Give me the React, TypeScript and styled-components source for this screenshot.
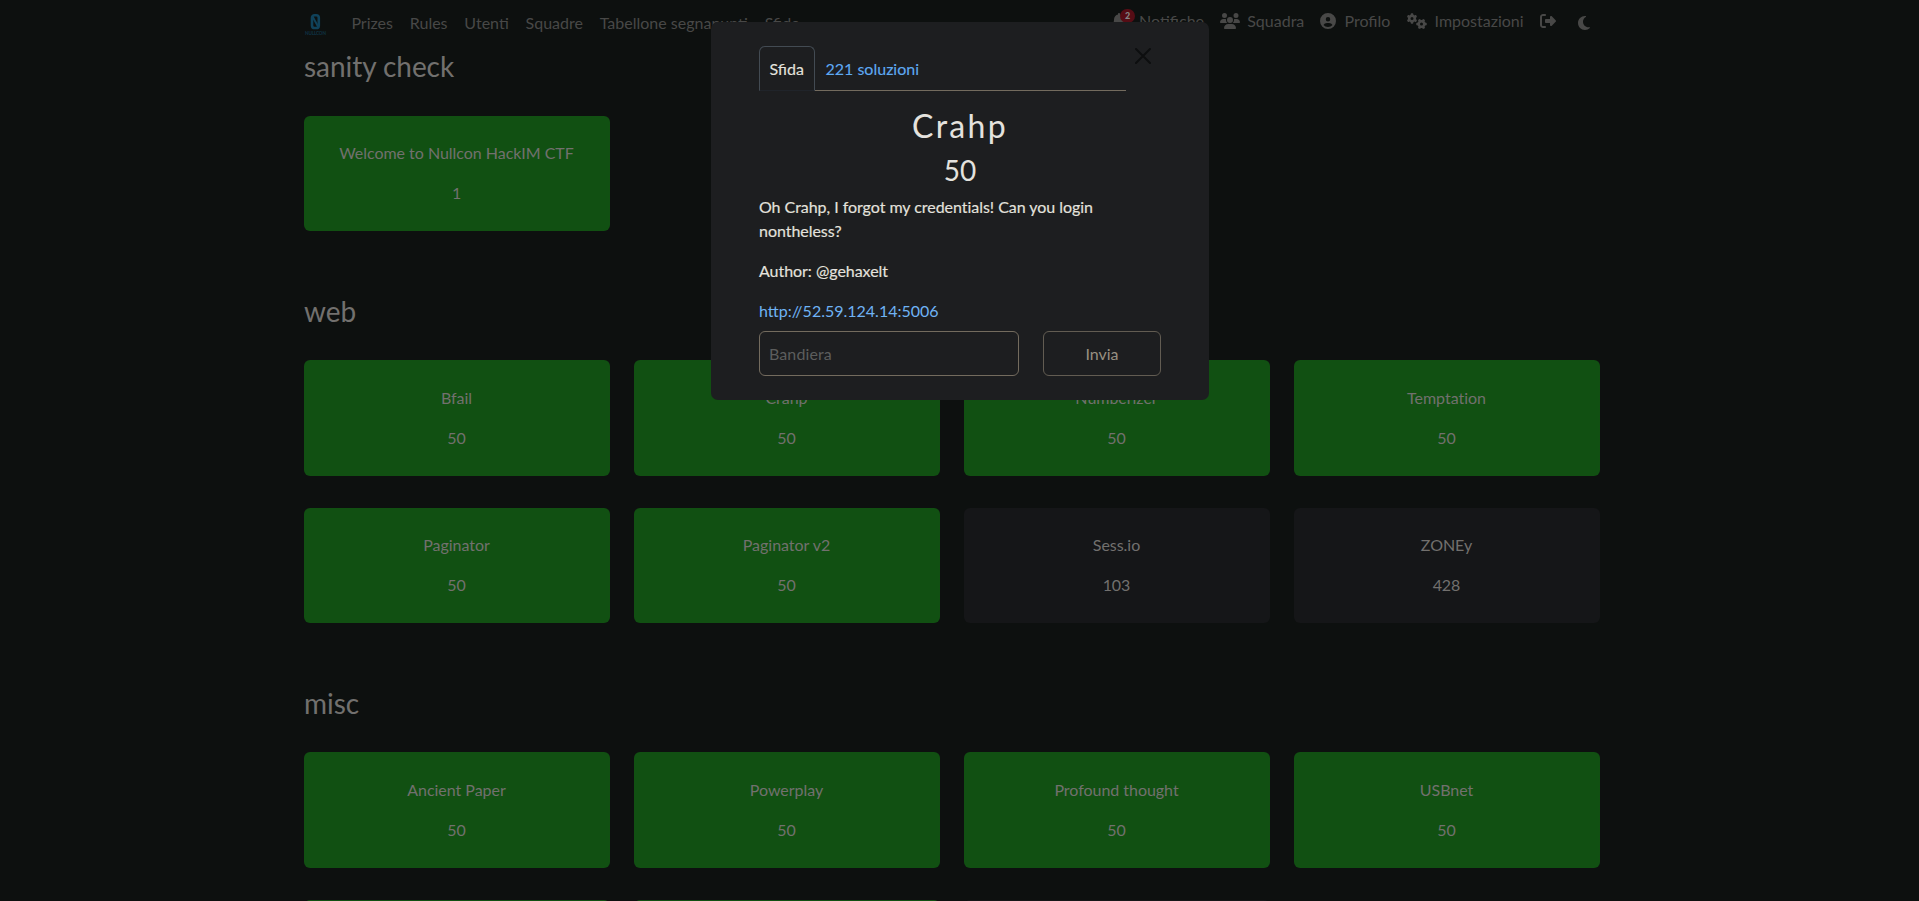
import React from "react";
import styled, { createGlobalStyle } from "styled-components";
import { FaBell, FaUsers, FaCircleUser, FaGears, FaRightFromBracket, FaMoon } from "react-icons/fa6";

const GlobalStyle = createGlobalStyle`
  * { box-sizing: border-box; }
  html, body { height: 100%; }
  body { margin: 0; background: #0d100f; font: 400 16px/24px Lato, sans-serif; overflow: hidden; }
  h2, h3, p, ul { margin: 0; padding: 0; font-weight: 400; }
  button, input { font: inherit; }
`;

const Page = styled.div`
  height: 100vh;
  overflow: hidden;
  color: #72706e;
`;

const Container = styled.div`
  width: 1296px;
  margin: 0 auto 0 304px;
`;

const Navbar = styled.nav`
  display: flex;
  align-items: flex-start;
  height: 50px;
  color: #484847;
`;

const Brand = styled.svg`
  width: 24px;
  height: 24px;
  margin: 12px 23.4px 0 0;
`;

const NavGroup = styled.div<{ $right?: boolean }>`
  display: flex;
  gap: ${(p) => (p.$right ? 16.2 : 16.8)}px;
  padding-top: ${(p) => (p.$right ? 9 : 11)}px;
  margin-left: ${(p) => (p.$right ? "auto" : "0")};
`;

const NavItem = styled.span<{ $gap?: number }>`
  position: relative;
  display: flex;
  align-items: center;
  gap: ${(p) => p.$gap ?? 8}px;
  white-space: nowrap;
`;

const ThemeToggle = styled(NavItem)`
  margin: 4px 8px 0 4px;
`;

const BellIcon = styled(FaBell)`
  margin-left: -1px;
`;

const Badge = styled.span`
  position: absolute;
  left: 8px;
  top: 0;
  width: 15px;
  height: 14px;
  border-radius: 7px;
  background: #560d15;
  color: #858585;
  font: 900 9px/14px Lato, sans-serif;
  text-align: center;
`;

const Section = styled.section`
  margin-bottom: 31.2px;

  & + & > h3 {
    height: 64.8px;
    margin-top: 32px;
  }
`;

const SectionTitle = styled.h3`
  height: 65.6px;
  font-size: 28px;
  line-height: 33.6px;
  letter-spacing: -0.05px;
`;

const Grid = styled.div`
  display: grid;
  grid-template-columns: repeat(4, 306px);
  column-gap: 24px;
`;

const Card = styled.div<{ $solved: boolean }>`
  height: 115.6px;
  margin-bottom: 32px;
  padding: 25.8px 1px 0 0;
  border-radius: 6px;
  background: ${(p) => (p.$solved ? "#115012" : "#151618")};
  text-align: center;
  letter-spacing: -0.03px;

  p + p { margin-top: 16px; }
`;

const Modal = styled.div`
  position: absolute;
  left: 711px;
  top: 22px;
  width: 498px;
  height: 378px;
  padding: 24px 48px;
  border-radius: 7px;
  background: #1d1e20;
  color: #e4e2de;
`;

const ModalHead = styled.div`
  display: flex;
  align-items: flex-start;
`;

const Tabs = styled.div`
  display: flex;
  width: 367px;
  height: 45px;
  border-bottom: 1px solid #736b5e;
`;

const Tab = styled.div<{ $active?: boolean }>`
  height: 45px;
  min-width: 56px;
  padding: 10px 9px 10px 9.5px;
  border: 1px solid ${(p) => (p.$active ? "#434b53" : "transparent")};
  border-bottom-color: ${(p) => (p.$active ? "#20242a" : "transparent")};
  border-radius: 6px 6px 0 0;
  color: ${(p) => (p.$active ? "#e4e2de" : "#5ea9f2")};
  -webkit-text-stroke: 0.12px;
`;

const Close = styled.svg`
  width: 16px;
  height: 16px;
  margin: 2px 0 0 9px;
`;

const ChallengeName = styled.h2`
  margin-top: 16px;
  font-size: 32px;
  line-height: 38.4px;
  letter-spacing: 2.3px;
  text-align: center;
`;

const ChallengeValue = styled.h3`
  margin-top: 9px;
  font-size: 28px;
  line-height: 33.6px;
  text-align: center;
`;

const Description = styled.div`
  margin-top: 7px;
  width: 367px;

  p + p { margin-top: 16px; }
`;

const Text = styled.p`
  letter-spacing: -0.04px;
  -webkit-text-stroke: 0.15px;
`;

const Link = styled.a`
  color: #6fb3f5;
`;

const SubmitRow = styled.div`
  display: flex;
  gap: 24px;
  margin-top: 8px;
`;

const FlagInput = styled.input`
  width: 260px;
  height: 45px;
  padding: 0 9px;
  border: 1px solid #736b5e;
  border-radius: 6px;
  background: transparent;
  &::placeholder { color: #5c5d5d; opacity: 1; letter-spacing: 0.1px; }
`;

const Submit = styled.button`
  width: 118px;
  height: 45px;
  padding: 0;
  border: 1px solid #625c52;
  border-radius: 6px;
  background: transparent;
  color: #989082;
`;

type Challenge = [name: string, value: number, solved: boolean];

const sections: { title: string; items: Challenge[] }[] = [
  { title: "sanity check", items: [["Welcome to Nullcon HackIM CTF", 1, true]] },
  {
    title: "web",
    items: [
      ["Bfail", 50, true],
      ["Crahp", 50, true],
      ["Numberizer", 50, true],
      ["Temptation", 50, true],
      ["Paginator", 50, true],
      ["Paginator v2", 50, true],
      ["Sess.io", 103, false],
      ["ZONEy", 428, false],
    ],
  },
  {
    title: "misc",
    items: [
      ["Ancient Paper", 50, true],
      ["Powerplay", 50, true],
      ["Profound thought", 50, true],
      ["USBnet", 50, true],
      ["", 0, true],
      ["", 0, true],
      ["", 0, false],
    ],
  },
];

export default function App() {
  return (
    <Page>
      <GlobalStyle />
      <Container>
        <Navbar>
          <Brand viewBox="0 0 24 24">
            <rect x="8" y="3.2" width="6.8" height="12.8" rx="2.6" fill="none" stroke="#10425a" strokeWidth="2.6" />
            <path d="M8.5 4.5l5.8 10.5" stroke="#10425a" strokeWidth="2" />
            <text x="1" y="22.8" fontSize="4.6" fontWeight="900" textLength="21" fill="#0d3142">NULLCON</text>
          </Brand>
          <NavGroup>
            {["Prizes", "Rules", "Utenti", "Squadre", "Tabellone segnapunti", "Sfide"].map((t) => (
              <NavItem key={t}>{t}</NavItem>
            ))}
          </NavGroup>
          <NavGroup $right>
            <NavItem $gap={12}><BellIcon size={16} /><Badge>2</Badge>Notifiche</NavItem>
            <NavItem $gap={7}><FaUsers size={20} />Squadra</NavItem>
            <NavItem><FaCircleUser size={16} />Profilo</NavItem>
            <NavItem><FaGears size={20} />Impostazioni</NavItem>
            <NavItem><FaRightFromBracket size={16} /></NavItem>
            <ThemeToggle><FaMoon size={16} /></ThemeToggle>
          </NavGroup>
        </Navbar>
        {sections.map((s) => (
          <Section key={s.title}>
            <SectionTitle>{s.title}</SectionTitle>
            <Grid>
              {s.items.map(([name, value, solved], i) => (
                <Card key={i} $solved={solved}>
                  {name && <><p>{name}</p><p>{value}</p></>}
                </Card>
              ))}
            </Grid>
          </Section>
        ))}
      </Container>
      <Modal role="dialog">
        <ModalHead>
          <Tabs>
            <Tab $active>Sfida</Tab>
            <Tab>221 soluzioni</Tab>
          </Tabs>
          <Close viewBox="0 0 16 16">
            <path d="M1 1l14 14M15 1L1 15" stroke="#0d0e0f" strokeWidth="2" strokeLinecap="round" />
          </Close>
        </ModalHead>
        <ChallengeName>Crahp</ChallengeName>
        <ChallengeValue>50</ChallengeValue>
        <Description>
          <Text>Oh Crahp, I forgot my credentials! Can you login nontheless?</Text>
          <Text>Author: @gehaxelt</Text>
          <p><Link>http://52.59.124.14:5006</Link></p>
        </Description>
        <SubmitRow>
          <FlagInput placeholder="Bandiera" />
          <Submit>Invia</Submit>
        </SubmitRow>
      </Modal>
    </Page>
  );
}
